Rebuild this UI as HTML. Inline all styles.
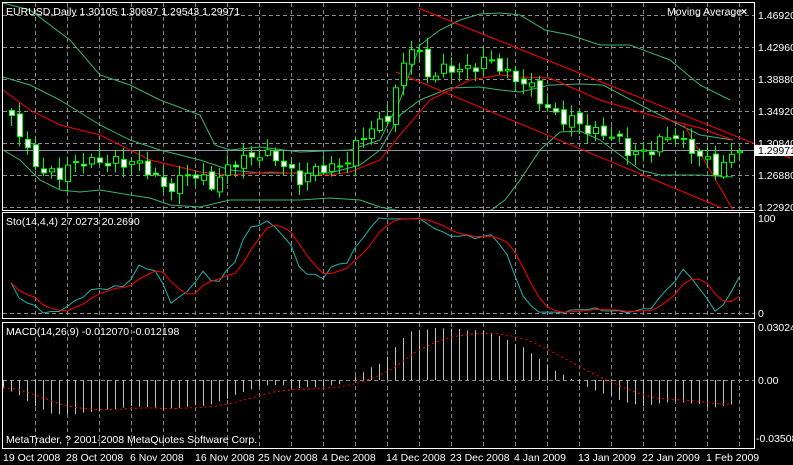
<!DOCTYPE html>
<html><head><meta charset="utf-8"><style>
html,body{margin:0;padding:0;background:#000;width:793px;height:465px;overflow:hidden}
svg{display:block}
text{font-family:"Liberation Sans",sans-serif;font-size:10.5px;fill:#fff}
</style></head><body>
<svg id="s" width="793" height="465" xmlns="http://www.w3.org/2000/svg">
<rect width="793" height="465" fill="#000"/>
<g id="grid" stroke="#8a8a8a" stroke-dasharray="4,3" stroke-width="1"></g>
<g id="plot"></g>
<g fill="none" stroke="#fff" stroke-width="1">
<rect x="2.5" y="2.5" width="752" height="208"/>
<rect x="2.5" y="212.5" width="752" height="106"/>
<rect x="2.5" y="322.5" width="752" height="126"/>
</g>
<text x="6" y="15">EURUSD,Daily  1.30105 1.30697 1.29543 1.29971</text>
<text x="667" y="15">Moving Average</text><text x="741" y="15" font-weight="bold">×</text>
<text x="6" y="225">Sto(14,4,4) 27.0273 20.2690</text>
<text x="6" y="335">MACD(14,26,9) -0.012070 -0.012198</text>
<text x="6" y="443">MetaTrader, ? 2001-2008 MetaQuotes Software Corp.</text>
<g id="axis"></g>
<rect x="755" y="145" width="38" height="11" fill="#fff"/>
<text x="758" y="154" style="fill:#000">1.29971</text>
<text x="3" y="461">19 Oct 2008</text><text x="66" y="461">28 Oct 2008</text><text x="130" y="461">6 Nov 2008</text>
<text x="195" y="461">16 Nov 2008</text><text x="258" y="461">25 Nov 2008</text><text x="322" y="461">4 Dec 2008</text>
<text x="386" y="461">14 Dec 2008</text><text x="450" y="461">23 Dec 2008</text><text x="514" y="461">4 Jan 2009</text>
<text x="578" y="461">13 Jan 2009</text><text x="642" y="461">22 Jan 2009</text><text x="706" y="461">1 Feb 2009</text>
</svg>
<script>
var NS="http://www.w3.org/2000/svg";
function el(p,t,a){var e=document.createElementNS(NS,t);for(var k in a)e.setAttribute(k,a[k]);p.appendChild(e);return e;}
var g=document.getElementById('grid'),P=document.getElementById('plot'),A=document.getElementById('axis');
for(var x=35;x<754;x+=32){el(g,'line',{x1:x+.5,y1:3,x2:x+.5,y2:210});el(g,'line',{x1:x+.5,y1:213,x2:x+.5,y2:318});el(g,'line',{x1:x+.5,y1:323,x2:x+.5,y2:448});}
var hy=[15,47,79,111,143,175,207],lab=["1.46920","1.42960","1.38880","1.34920","1.30840","1.26880","1.22920"];
hy.forEach(function(y,i){el(g,'line',{x1:3,y1:y+.5,x2:754,y2:y+.5});var t=el(A,'text',{x:758,y:y+4});t.textContent=lab[i];});
el(g,'line',{x1:3,y1:313.5,x2:754,y2:313.5});el(g,'line',{x1:3,y1:380.5,x2:754,y2:380.5});
[[758,222,"100"],[758,317,"0"],[758,331,"0.030241"],[758,384,"0.00"],[756,442,"-0.035086"]].forEach(function(a){var t=el(A,'text',{x:a[0],y:a[1]});t.textContent=a[2];});
el(P,'line',{x1:3,y1:150.5,x2:754,y2:150.5,stroke:'#8c96a0'});
var kp=[[11,115],[27,155],[43,168],[59,176],[83,157],[107,165],[131,158],[163,186],[187,176],[211,181],[235,164],[259,150],[283,166],[299,176],[331,167],[347,157],[371,128],[387,113],[403,68],[413,40],[427,72],[443,72],[459,68],[483,62],[499,66],[523,82],[539,100],[563,118],[579,126],[603,131],[627,150],[651,150],[675,132],[699,158],[715,168],[739,148]];
function interp(x){for(var i=0;i<kp.length-1;i++){if(x<=kp[i+1][0]){var a=kp[i],b=kp[i+1];return a[1]+(b[1]-a[1])*(x-a[0])/(b[0]-a[0]);}}return kp[kp.length-1][1];}
var N=92,xs=[],C=[],O=[],H=[],L=[];
for(var k=0;k<N;k++){var x=11+8*k;xs.push(x);var n=Math.sin(k*2.3)*7+Math.sin(k*5.1)*4;C.push(interp(x)+n*0.8);}
for(k=0;k<N;k++){O.push(k?C[k-1]+Math.sin(k*3.7)*3:C[0]-5);var hi=Math.min(O[k],C[k])-2-Math.abs(Math.sin(k*1.9))*9;var lo=Math.max(O[k],C[k])+2+Math.abs(Math.cos(k*2.7))*9;H.push(hi);L.push(lo);}
var pre=[];for(k=0;k<30;k++)pre.push(95+k*0.7+Math.sin(k*2)*6);
var all=pre.concat(C),off=30;
function line(pts,col,extra){var d=pts.map(function(p,i){return (i?'L':'M')+p[0].toFixed(1)+' '+p[1].toFixed(1);}).join('');var a={d:d,fill:'none',stroke:col,'stroke-width':1};for(var q in extra)a[q]=extra[q];el(P,'path',a);}
var bb='#3cb371';
line([[3,3],[30,10],[70,40],[100,75],[130,85],[160,100],[200,115],[215,145],[230,150],[260,147],[300,152],[350,150],[380,140],[400,100],[420,45],[440,30],[460,20],[480,14],[500,13],[520,15],[545,30],[570,35],[600,45],[630,45],[670,60],[700,85],[730,100]],bb);
line([[3,77],[30,85],[60,100],[100,125],[130,140],[160,150],[200,160],[230,170],[260,173],[300,173],[330,173],[360,165],[380,150],[400,115],[420,100],[450,88],[480,87],[500,90],[520,92],[550,85],[580,84],[603,85],[650,110],[700,135],[733,140]],bb);
line([[3,150],[20,160],[40,180],[60,190],[80,192],[100,190],[130,195],[150,198],[170,205],[200,207],[230,200],[260,200],[300,200],[330,198],[360,200],[380,207],[400,211]],bb);
line([[490,211],[505,200],[520,180],[540,150],[560,132],[580,131],[600,140],[620,155],[640,170],[660,175],[700,175],[733,177]],bb);
line([[3,90],[30,110],[60,125],[100,135],[150,160],[200,172],[230,175],[270,172],[330,175],[350,172],[380,160],[400,135],[430,100],[470,80],[500,75],[520,77],[550,78],[600,100],[650,115],[700,128],[733,140]],'#ff0000');
line([[418,8],[790,158]],'#ff0000');line([[396,72],[722,208]],'#ff0000');line([[683,123],[733,210]],'#ff0000');
for(k=0;k<N;k++){var x=xs[k];el(P,'line',{x1:x+.5,y1:H[k],x2:x+.5,y2:L[k],stroke:'#00ff00'});var t=Math.min(O[k],C[k]),b=Math.max(O[k],C[k]);if(b-t<1){b=t+1;}el(P,'rect',{x:x-2+.5,y:t+.5,width:5,height:b-t,fill:C[k]>O[k]?'#fff':'#000',stroke:'#00ff00'});}
var kraw=[];for(k=0;k<N;k++){var hh=1e9,ll=-1e9;for(j=0;j<14;j++){var i=k+off-j,v=all[i];if(v<hh)hh=v;if(v>ll)ll=v;}kraw.push(ll-hh<1?50:100*(ll-all[k+off])/(ll-hh));}
var j;var ks=[];for(k=0;k<N;k++){var s=0,c=0;for(j=0;j<4;j++)if(k-j>=0){s+=kraw[k-j];c++;}ks.push(s/c);}
var ds=[];for(k=0;k<N;k++){var s=0,c=0;for(j=0;j<4;j++)if(k-j>=0){s+=ks[k-j];c++;}ds.push(s/c);}
function sy(v){return 313-v*0.95;}
line(ks.map(function(v,i){return[xs[i],sy(v)];}),'#20b2aa');line(ds.map(function(v,i){return[xs[i],sy(v)];}),'#ff0000');
function ema(arr,n){var a=2/(n+1),r=[arr[0]];for(var i=1;i<arr.length;i++)r.push(r[i-1]+a*(arr[i]-r[i-1]));return r;}
var e1=ema(all,14),e2=ema(all,26),mc=all.map(function(v,i){return e2[i]-e1[i];}),sg=ema(mc,9);
var mx=0;for(k=0;k<N;k++)mx=Math.max(mx,Math.abs(mc[k+off]));var sc=52/mx;
for(k=0;k<N;k++){var v=mc[k+off]*sc;el(P,'line',{x1:xs[k]-7.5,y1:380,x2:xs[k]-7.5,y2:380-v,stroke:'#c0c0c0'});}
line(sg.slice(off).map(function(v,i){return[xs[i]-8,380-v*sc];}),'#ff0000',{'stroke-dasharray':'2,3'});
</script>
</body></html>
